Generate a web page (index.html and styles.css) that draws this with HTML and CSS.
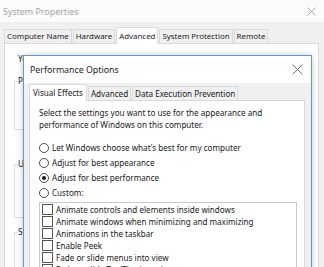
FILE: index.html
```html
<!DOCTYPE html>
<html>
<head>
<meta charset="utf-8">
<link rel="stylesheet" href="styles.css">
</head>
<body>
<div class="win">
  <div class="win-title">
    <span class="win-caption">System Properties</span>
    <svg class="win-close" width="9" height="9" viewBox="0 0 9 9"><path d="M0.5 0.5L8.5 8.5M8.5 0.5L0.5 8.5" stroke="#a8a8a8" stroke-width="1" fill="none"/></svg>
  </div>
  <div class="win-body">
    <div class="tabs outer-tabs">
      <div class="tab">Computer Name</div>
      <div class="tab">Hardware</div>
      <div class="tab active">Advanced</div>
      <div class="tab">System Protection</div>
      <div class="tab">Remote</div>
    </div>
    <div class="outer-panel">
      <p class="note">You must be logged on as an Administrator to make most of these changes.</p>
      <fieldset class="group g-perf">
        <legend>Performance</legend>
        <p>Visual effects, processor scheduling, memory usage and virtual memory</p>
      </fieldset>
      <fieldset class="group g-user">
        <legend>User Profiles</legend>
        <p>Desktop settings related to your sign-in</p>
      </fieldset>
      <fieldset class="group g-start">
        <legend>Startup and Recovery</legend>
        <p>System startup, system failure, and debugging information</p>
      </fieldset>
    </div>
  </div>

  <div class="dialog">
    <div class="dlg-title">
      <span>Performance Options</span>
      <svg class="dlg-close" width="11" height="11" viewBox="0 0 11 11"><path d="M0.5 0.5L10.5 10.5M10.5 0.5L0.5 10.5" stroke="#6b6b6b" stroke-width="1" fill="none"/></svg>
    </div>
    <div class="dlg-body">
      <div class="tabs inner-tabs">
        <div class="tab active">Visual Effects</div>
        <div class="tab">Advanced</div>
        <div class="tab">Data Execution Prevention</div>
      </div>
      <div class="inner-panel">
        <p class="intro">Select the settings you want to use for the appearance and<br>performance of Windows on this computer.</p>
        <div class="radios">
          <div class="radio"><span class="dot"></span>Let Windows choose what's best for my computer</div>
          <div class="radio"><span class="dot"></span>Adjust for best appearance</div>
          <div class="radio"><span class="dot on"></span>Adjust for best performance</div>
          <div class="radio"><span class="dot"></span>Custom:</div>
        </div>
        <div class="listbox">
          <div class="item"><span class="box"></span>Animate controls and elements inside windows</div>
          <div class="item"><span class="box"></span>Animate windows when minimizing and maximizing</div>
          <div class="item"><span class="box"></span>Animations in the taskbar</div>
          <div class="item"><span class="box"></span>Enable Peek</div>
          <div class="item"><span class="box"></span>Fade or slide menus into view</div>
          <div class="item"><span class="box"></span>Fade or slide ToolTips into view</div>
        </div>
      </div>
    </div>
  </div>
</div>
</body>
</html>
```
FILE: styles.css
```css
* { box-sizing: border-box; }
html, body { margin: 0; padding: 0; }
body {
  width: 324px;
  height: 267px;
  overflow: hidden;
  background: #f0f0f0;
  font-family: "Noto Sans", "Open Sans", sans-serif;
  font-size: 8.1px;
  color: #1a1a1a;
}
.win {
  position: relative;
  width: 324px;
  height: 267px;
  overflow: hidden;
  background: #f0f0f0;
}
.win-title {
  height: 22px;
  background: #fbfbfb;
  display: flex;
  align-items: center;
  justify-content: space-between;
  padding: 0 8px 0 3px;
}
.win-caption {
  color: #a3a3a3;
  font-size: 8.9px;
}
.win-body {
  padding: 5px 5px 0 4px;
}
.tabs {
  display: flex;
  align-items: flex-end;
}
.tab {
  border: 1px solid #d9d9d9;
  border-bottom: none;
  background: #f0f0f0;
  white-space: nowrap;
  text-align: center;
}
.outer-tabs .tab {
  height: 14px;
  line-height: 13px;
  padding: 0 2px;
  margin-right: 1px;
  font-size: 7.9px;
  color: #222;
}
.outer-tabs .tab.active {
  background: #fff;
  height: 17px;
  line-height: 16px;
  margin-bottom: -1px;
  position: relative;
  z-index: 1;
}
.outer-panel {
  background: #fff;
  border: 1px solid #d9d9d9;
  height: 240px;
  padding: 9px 9px 0 9px;
  font-size: 8.2px;
}
.note {
  margin: 0 0 10px 4px;
  line-height: 12px;
  white-space: nowrap;
}
.group {
  margin: 0;
  border: 1px solid #dcdcdc;
  padding: 2px 8px 6px 12px;
}
.group legend {
  padding: 0 1px;
  margin-left: -10px;
  line-height: 12px;
}
.group p {
  margin: 0;
  line-height: 12px;
}
.g-perf { height: 55px; margin-bottom: 28px; }
.g-user { height: 60px; margin-bottom: 8px; }
.g-start { height: 55px; }

.dialog {
  position: absolute;
  left: 23px;
  top: 55px;
  width: 289px;
  height: 230px;
  border: 1px solid #5c9ad6;
  background: #f0f0f0;
  box-shadow: 0 0 6px rgba(0, 0, 0, 0.22);
  z-index: 5;
}
.dlg-title {
  height: 27px;
  background: #fff;
  display: flex;
  align-items: center;
  justify-content: space-between;
  padding: 0 8px 0 6px;
  font-size: 8.8px;
  color: #1a1a1a;
}
.dlg-body {
  padding: 1px 6px 0 5px;
}
.inner-tabs .tab {
  height: 14px;
  line-height: 13px;
  padding: 0 2px;
  margin-right: 1px;
  color: #1a1a1a;
}
.inner-tabs .tab.active {
  background: #fff;
  height: 17px;
  line-height: 16px;
  margin-bottom: -1px;
  position: relative;
  z-index: 1;
  padding: 0 3px;
}
.inner-panel {
  background: #fff;
  border: 1px solid #d9d9d9;
  height: 200px;
  padding: 6px 8px 0 9px;
}
.intro {
  margin: 0;
  line-height: 12px;
}
.radios {
  margin-top: 9px;
}
.radio {
  height: 15px;
  display: flex;
  align-items: center;
  white-space: nowrap;
}
.dot {
  width: 10px;
  height: 10px;
  border: 1px solid #4d4d4d;
  border-radius: 50%;
  margin-right: 3px;
  flex: none;
  display: flex;
  align-items: center;
  justify-content: center;
}
.dot.on::after {
  content: "";
  width: 4px;
  height: 4px;
  border-radius: 50%;
  background: #1a1a1a;
}
.listbox {
  margin-top: 2px;
  width: 258px;
  height: 80px;
  border: 1px solid #c9c9c9;
  padding: 0 0 0 2px;
  overflow: hidden;
}
.item {
  height: 12px;
  display: flex;
  align-items: center;
  white-space: nowrap;
}
.box {
  width: 11px;
  height: 11px;
  border: 1px solid #555;
  margin-right: 3px;
  flex: none;
}
```
